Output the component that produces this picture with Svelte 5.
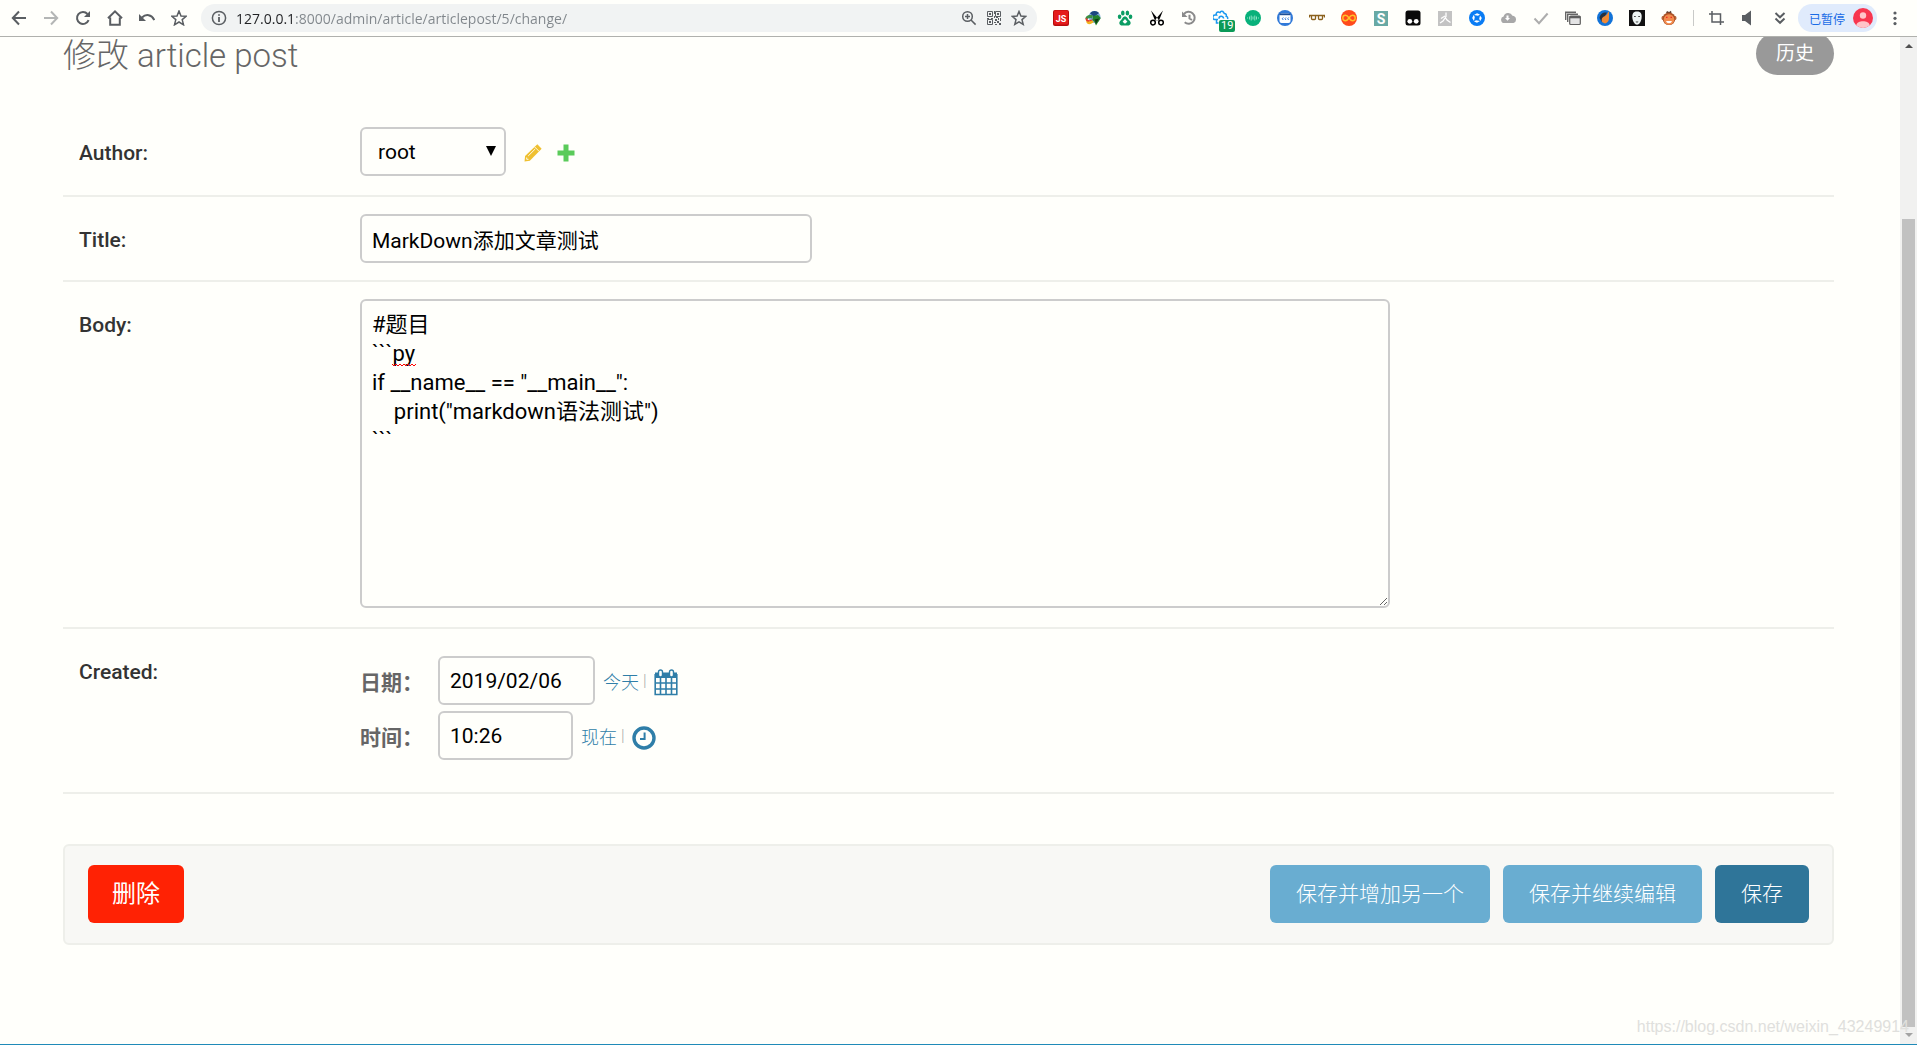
<script lang="ts">
	let url = $state('127.0.0.1:8000/admin/article/articlepost/5/change/');
	let author = $state('root');
	let title = $state('MarkDown添加文章测试');
	let body = $state(
		['#题目', '```py', 'if __name__ == "__main__":', '    print("markdown语法测试")', '```'].join('\n')
	);
	let createdDate = $state('2019/02/06');
	let createdTime = $state('10:26');

	const pad = (n: number) => String(n).padStart(2, '0');

	function setToday() {
		const d = new Date();
		createdDate = `${d.getFullYear()}/${pad(d.getMonth() + 1)}/${pad(d.getDate())}`;
	}

	function setNow() {
		const d = new Date();
		createdTime = `${pad(d.getHours())}:${pad(d.getMinutes())}`;
	}
</script>

<div class="browser">
	<header class="toolbar">
		<nav class="icons nav-icons">
			<button type="button" aria-label="Back">
				<svg viewBox="0 0 16 16"><path d="M15 8H2M8 1.5L1.8 8L8 14.5" class="line" /></svg>
			</button>
			<button type="button" aria-label="Forward" class="faded">
				<svg viewBox="0 0 16 16"><path d="M1 8H14M8 1.5L14.2 8L8 14.5" class="line" /></svg>
			</button>
			<button type="button" aria-label="Reload">
				<svg viewBox="0 0 16 16">
					<path d="M13.6 10.2A6 6 0 1 1 12.5 4" class="line" />
					<path d="M15 1V7H9z" />
				</svg>
			</button>
			<button type="button" aria-label="Home">
				<svg viewBox="0 0 16 16"><path d="M1 8.2L8 1.4L15 8.2M3.2 7.5V14.8H12.8V7.5" class="line" /></svg>
			</button>
			<button type="button" aria-label="Undo">
				<svg viewBox="0 0 16 16">
					<path d="M3 7.5C7 3.6 12.5 4.5 15.3 10" class="line" />
					<path d="M0 4V11H7z" />
				</svg>
			</button>
			<button type="button" aria-label="Favorites">
				<svg viewBox="0 0 16 16">
					<path d="M8 1L10 6L15.2 6.3L11.2 9.6L12.5 14.8L8 12L3.5 14.8L4.8 9.6L0.8 6.3L6 6z" class="line thin" />
				</svg>
			</button>
		</nav>

		<div class="omnibox">
			<svg viewBox="0 0 16 16" class="info">
				<circle cx="8" cy="8" r="6.6" class="line thin" />
				<path d="M7.1 7H8.9V12H7.1zM7.1 4.2H8.9V5.8H7.1z" />
			</svg>
			<input class="url" type="text" aria-label="Address" bind:value={url} />
			<div class="icons omnibox-icons">
				<button type="button" aria-label="Zoom">
					<svg viewBox="0 0 16 16">
						<circle cx="6.5" cy="6.5" r="4.8" class="line thin" />
						<path d="M10 10L14.6 14.6M4 6.5H9M6.5 4V9" class="line thin" />
					</svg>
				</button>
				<button type="button" aria-label="QR code">
					<svg viewBox="0 0 16 16">
						<path d="M1.5 1.5H6.5V6.5H1.5zM9.5 1.5H14.5V6.5H9.5zM1.5 9.5H6.5V14.5H1.5z" class="line hair" />
						<path d="M3 3H5V5H3zM11 3H13V5H11zM3 11H5V13H3zM8 1H9V4H8zM8 6H9V8H8zM1 8H3V9H1zM5 8H7V9H5zM9 9H11V11H9zM12 8H13V10H12zM14 8H15V11H14zM8 12H10V13H8zM11 11H13V13H11zM9 14H11V15H9zM13 13H15V15H13zM10 7H12V8H10z" />
					</svg>
				</button>
				<button type="button" aria-label="Bookmark">
					<svg viewBox="0 0 16 16">
						<path d="M8 1.5L9.9 6.1L14.8 6.4L11 9.6L12.2 14.4L8 11.8L3.8 14.4L5 9.6L1.2 6.4L6.1 6.1z" class="line thin" />
					</svg>
				</button>
			</div>
		</div>

		<div class="icons extensions">
			<button type="button" aria-label="JS">
				<svg viewBox="0 0 16 16">
					<rect width="16" height="16" rx="2" fill="#b80d0d" />
					<rect x="1" y="0.5" width="14" height="14" rx="1.5" fill="#e51c1c" />
					<text x="8" y="11.5" text-anchor="middle" font-size="9" font-weight="700" fill="#fff">JS</text>
				</svg>
			</button>
			<button type="button" aria-label="Download manager">
				<svg viewBox="0 0 16 16">
					<circle cx="9.5" cy="7" r="6" fill="#7fa9dc" />
					<path d="M5 3.2A6 6 0 0 1 14 3L9 7z" fill="#1c4780" />
					<path d="M0.5 9C0 6 4 4 8 5.5L7 8.5C4 7.5 3 8 2 10.5z" fill="#3d8f44" />
					<path d="M0.5 8.5C1 13 4 12.5 7 11L8 9C5 10.5 2.5 11 2 8z" fill="#e43b2c" />
					<path d="M1 11C2 15.5 6 14.5 9 12L7 10.5C4 12 3 12 1 11z" fill="#f2b51d" />
					<path d="M8 6L13 5L15.8 8L11 15.5L9.5 12L7.5 10z" fill="#23832b" />
					<path d="M9.5 9.5L14 8.5L11 14z" fill="#0c3b13" />
				</svg>
			</button>
			<button type="button" aria-label="Paw">
				<svg viewBox="0 0 16 16" class="green">
					<ellipse cx="2.6" cy="6.8" rx="1.8" ry="2.3" />
					<ellipse cx="5.8" cy="2.9" rx="1.8" ry="2.5" />
					<ellipse cx="10.4" cy="2.9" rx="1.8" ry="2.5" />
					<ellipse cx="13.5" cy="6.8" rx="1.8" ry="2.3" />
					<path d="M8 6.5C5.5 6.5 5.5 9 3.5 10.5C1 13 3 16 5.5 15.5H10.5C13 16 15 13 12.5 10.5C10.5 9 10.5 6.5 8 6.5z" />
					<path d="M8 9L10.4 11.7L8 13.8L5.6 11.7z" fill="#fff" />
				</svg>
			</button>
			<button type="button" aria-label="Scissors">
				<svg viewBox="0 0 16 16" class="black">
					<circle cx="4" cy="12.6" r="2.3" class="line thin" />
					<circle cx="12" cy="12.6" r="2.3" class="line thin" />
					<path d="M2 0.5L9.5 9.5L8 11L5.8 10zM14 0.5L6.5 9.5L8 11L10.2 10z" />
				</svg>
			</button>
			<button type="button" aria-label="History" class="gray">
				<svg viewBox="0 0 16 16">
					<path d="M3 4A6 6 0 1 1 3.7 12.3M8.5 4.8V8.5L11 10" class="line" />
					<path d="M1 1.5V7H6.5z" />
				</svg>
			</button>
			<button type="button" aria-label="Settings cloud" class="badged">
				<svg viewBox="0 0 16 16">
					<path d="M5 9.5H2A2.2 2.2 0 0 1 2 5L3.5 5A2 2 0 0 1 5.5 2L7 2.6A2 2 0 0 1 10.5 2.2L11.3 3.4A2 2 0 0 1 13.2 6.2A2 2 0 0 1 14.5 9M6 8.8A2.3 2.3 0 1 1 10.6 8.5M3.5 10V13H5.5" class="line thin sky" />
				</svg>
				<span class="badge">19</span>
			</button>
			<button type="button" aria-label="Audio">
				<svg viewBox="0 0 16 16">
					<circle cx="8" cy="8" r="8" fill="#08b17a" />
					<path d="M2 8H3M4.5 6.5V9.5M6.2 5.5V10.5M8 6.5V9.5M9.8 5.5V10.5M11.5 6.5V9.5M13 8H14" stroke="#8ce2c4" fill="none" />
				</svg>
			</button>
			<button type="button" aria-label="Chat">
				<svg viewBox="0 0 16 16">
					<circle cx="8" cy="8" r="8" fill="#3079d8" />
					<rect x="2.5" y="3.5" width="11" height="9.5" rx="2" fill="#fff" />
					<path d="M2.5 3.5H13.5V5.2H2.5z" fill="#1c4e96" />
					<path d="M6.3 7.5Q4.3 8.7 6.3 10M9 7.5Q7 8.7 9 10M11.7 7.5Q9.7 8.7 11.7 10" stroke="#3079d8" fill="none" />
				</svg>
			</button>
			<button type="button" aria-label="Glasses">
				<svg viewBox="0 0 16 16">
					<path d="M0.5 7.5V5.5H15.5V7.5M2.5 5.5V8.5Q2.5 9.5 3.5 9.5H5.5Q6.5 9.5 6.5 8.5V5.5M9.5 5.5V8.5Q9.5 9.5 10.5 9.5H12.5Q13.5 9.5 13.5 8.5V5.5" stroke="#8b611c" stroke-width="1.3" fill="none" />
				</svg>
			</button>
			<button type="button" aria-label="Infinity">
				<svg viewBox="0 0 16 16">
					<circle cx="8" cy="8" r="8" fill="#ff4a1c" />
					<path d="M8 8C6.5 5.8 5.5 5.3 4.5 5.3A2.7 2.7 0 0 0 4.5 10.7C5.5 10.7 6.5 10.2 8 8C9.5 5.8 10.5 5.3 11.5 5.3A2.7 2.7 0 0 1 11.5 10.7C10.5 10.7 9.5 10.2 8 8z" stroke="#ffc229" stroke-width="1.4" fill="none" />
				</svg>
			</button>
			<button type="button" aria-label="S">
				<svg viewBox="0 0 16 16">
					<rect x="1" y="1" width="14" height="15" fill="#68a9a4" />
					<text x="8" y="13.5" text-anchor="middle" font-size="14" font-weight="700" fill="#fff">S</text>
				</svg>
			</button>
			<button type="button" aria-label="Scripts">
				<svg viewBox="0 0 16 16">
					<rect x="0.5" y="0.5" width="15" height="15" rx="2.5" fill="#0a0a0a" />
					<circle cx="4.8" cy="11.3" r="2.4" fill="#fff" />
					<circle cx="11.2" cy="11.3" r="2.4" fill="#fff" />
				</svg>
			</button>
			<button type="button" aria-label="Runner">
				<svg viewBox="0 0 16 16">
					<rect x="1" y="1" width="14" height="15" fill="#c3c3c3" />
					<path d="M9 2.5V6.5L6 11L3 13M8 7L10 10L13.5 12.5M4 8.5L8 6" stroke="#fff" stroke-width="1.3" fill="none" />
				</svg>
			</button>
			<button type="button" aria-label="Compass">
				<svg viewBox="0 0 16 16">
					<circle cx="8" cy="8" r="8" fill="#0a7cf4" />
					<path d="M8 3.2L11 4.6L9 5.8L5 5zM12.8 8L11.4 11L10.2 9L11 5.5zM8 12.8L5 11.4L7 10.2L11 11zM3.2 8L4.6 5L5.8 7L5 11z" fill="#fff" />
				</svg>
			</button>
			<button type="button" aria-label="Cloud download">
				<svg viewBox="0 0 16 16">
					<path d="M3.5 13A3.3 3.3 0 0 1 2.6 6.5A4.8 4.8 0 0 1 11.5 5.8A3.7 3.7 0 0 1 12.5 13z" fill="#a8a8a8" />
					<path d="M5.5 5.5H7.5V8H9L6.5 10.8L4 8H5.5z" fill="#fff" />
				</svg>
			</button>
			<button type="button" aria-label="Check">
				<svg viewBox="0 0 16 16"><path d="M1.5 8.5L6 13.2L14.6 3.5" stroke="#adadad" stroke-width="2" fill="none" /></svg>
			</button>
			<button type="button" aria-label="Windows">
				<svg viewBox="0 0 16 16">
					<path d="M0.7 10V2.2H11M2.7 12V4.2H13" stroke="#666" stroke-width="1.4" fill="none" />
					<rect x="4.7" y="6" width="10.6" height="8.5" rx="1" fill="#e4e4e4" stroke="#5f5f5f" stroke-width="1.2" />
					<path d="M4.7 6H15.3V8.3H4.7z" fill="#5f5f5f" />
				</svg>
			</button>
			<button type="button" aria-label="Hand">
				<svg viewBox="0 0 16 16">
					<circle cx="8" cy="8" r="8" fill="#1273d8" />
					<path d="M2.5 8C3 4 6 2 10 2.5L8 6L5 12z" fill="#27313f" />
					<path d="M12 1.5C10 3 10.5 5 8 6C5 7 4 9 5 12L8 13.5C12 12.5 12 9 12 7z" fill="#f08a35" />
				</svg>
			</button>
			<button type="button" aria-label="Mask">
				<svg viewBox="0 0 16 16">
					<rect width="16" height="16" fill="#111" />
					<path d="M8 1.5C12 1.5 13 4 12.6 8C12 12 10 14.7 8 14.7C6 14.7 4 12 3.4 8C3 4 4 1.5 8 1.5z" fill="#eef4f3" />
					<path d="M5 6.5H6.8M9.2 6.5H11M6.8 11.8Q8 12.4 9.2 11.8" stroke="#222" stroke-width="0.8" fill="none" />
				</svg>
			</button>
			<button type="button" aria-label="Monkey">
				<svg viewBox="0 0 16 16">
					<circle cx="2.7" cy="8" r="2.3" fill="#b5673c" />
					<circle cx="13.3" cy="8" r="2.3" fill="#b5673c" />
					<path d="M6 1L8 2L10 0.8L10.5 3H5z" fill="#5b3f33" />
					<circle cx="8" cy="8.8" r="6.3" fill="#a95126" />
					<ellipse cx="8" cy="9.5" rx="5.3" ry="5.2" fill="#f28b4c" />
					<path d="M5 11H11Q10.5 13.3 8 13.3Q5.5 13.3 5 11z" fill="#fff" />
					<path d="M5 6.8H6.5V8H5zM9.5 6.8H11V8H9.5z" fill="#f22c22" />
				</svg>
			</button>
		</div>

		<span class="divider"></span>

		<div class="icons">
			<button type="button" aria-label="Crop">
				<svg viewBox="0 0 16 16"><path d="M4 1V12H16M1 4H12.5V15" class="line thin" /></svg>
			</button>
			<button type="button" aria-label="Sound">
				<svg viewBox="0 0 16 16"><path d="M2 5H5L11 0.5V15.5L5 11H2z" /></svg>
			</button>
			<button type="button" aria-label="More tools">
				<svg viewBox="0 0 16 16"><path d="M3.5 3L8 7.3L12.5 3M3.5 8.5L8 12.8L12.5 8.5" class="line" /></svg>
			</button>
		</div>

		<button type="button" class="profile">
			已暂停
			<svg viewBox="0 0 20 20" class="avatar">
				<circle cx="10" cy="10" r="10" fill="#f8364f" />
				<circle cx="10" cy="7.5" r="3.2" fill="#ffc4c9" />
				<path d="M3.2 17.3C4 11.8 16 11.8 16.8 17.3A10 10 0 0 1 3.2 17.3z" fill="#ffc4c9" />
			</svg>
		</button>

		<div class="icons">
			<button type="button" aria-label="Menu">
				<svg viewBox="0 0 16 16">
					<circle cx="8" cy="3" r="1.6" />
					<circle cx="8" cy="8.3" r="1.6" />
					<circle cx="8" cy="13.6" r="1.6" />
				</svg>
			</button>
		</div>
	</header>

	<div class="viewport">
		<main>
			<div class="page-head">
				<h1>修改 article post</h1>
				<a class="history" href="#history">历史</a>
			</div>

			<form onsubmit={(e) => e.preventDefault()}>
				<div class="form-row">
					<label class="name" for="id_author">Author:</label>
					<div class="field related">
						<span class="select-wrap">
							<select id="id_author" bind:value={author}>
								<option>root</option>
							</select>
							<svg viewBox="0 0 10 10" class="arrow"><path d="M0 0H10L5 10z" /></svg>
						</span>
						<a href="#change" aria-label="Change author" class="edit">
							<svg viewBox="0 0 20 20" fill="#efc030">
								<path d="M14.8 0.4L19.6 5.2L6.5 18.7L0.6 19.4L1.2 13.4z" />
								<path d="M12 3.4L16.8 8.2M4.6 13.4L12.4 5.6M3 15V17H5" stroke="#fffffb" fill="none" />
							</svg>
						</a>
						<a href="#add" aria-label="Add author">
							<svg viewBox="0 0 18 18" fill="#5acb5a"><path d="M6.5 0.5H11.5V6.5H17.5V11.5H11.5V17.5H6.5V11.5H0.5V6.5H6.5z" /></svg>
						</a>
					</div>
				</div>

				<div class="form-row">
					<label class="name" for="id_title">Title:</label>
					<div class="field">
						<input id="id_title" class="title-input" type="text" bind:value={title} />
					</div>
				</div>

				<div class="form-row">
					<label class="name" for="id_body">Body:</label>
					<div class="field body-field">
						<textarea id="id_body" spellcheck="false" bind:value={body}></textarea>
						<svg viewBox="0 0 24 4" class="squiggle">
							<path d="M0 1L2 3L4 1L6 3L8 1L10 3L12 1L14 3L16 1L18 3L20 1L22 3L24 1" />
						</svg>
					</div>
				</div>

				<div class="form-row">
					<span class="name">Created:</span>
					<div class="field datetime">
						<div class="line-row">
							<label for="id_created_0">日期：</label>
							<input id="id_created_0" class="date-input" type="text" bind:value={createdDate} />
							<span class="shortcuts">
								<a href="#today" onclick={setToday}>今天</a><i>|</i>
								<a href="#calendar" aria-label="Calendar" class="picker">
									<svg viewBox="0 0 24 27" class="calendar">
										<path d="M1 3.5H23V9H1z" />
										<path d="M1.2 5V25.5H22.8V5M1 14H23M1 20H23M6.5 9V26M12 9V26M17.5 9V26" stroke-width="1.6" class="cal-line" />
										<rect x="4.5" y="1" width="4" height="7" rx="2" class="ring" />
										<rect x="15.5" y="1" width="4" height="7" rx="2" class="ring" />
									</svg>
								</a>
							</span>
						</div>
						<div class="line-row">
							<label for="id_created_1">时间：</label>
							<input id="id_created_1" class="time-input" type="text" bind:value={createdTime} />
							<span class="shortcuts">
								<a href="#now" onclick={setNow}>现在</a><i>|</i>
								<a href="#clock" aria-label="Clock" class="picker">
									<svg viewBox="0 0 24 24" class="clock">
										<circle cx="12" cy="12" r="10" stroke-width="3.4" class="cal-line" />
										<path d="M12.6 6.5V13H8" stroke-width="2" class="cal-line" />
									</svg>
								</a>
							</span>
						</div>
					</div>
				</div>

				<div class="submit-row">
					<a href="#delete" class="btn delete">删除</a>
					<button type="submit" class="btn">保存并增加另一个</button>
					<button type="submit" class="btn">保存并继续编辑</button>
					<button type="submit" class="btn default">保存</button>
				</div>
			</form>
		</main>

		<div class="scrollbar">
			<svg viewBox="0 0 8 4"><path d="M0 4L4 0L8 4z" fill="#505050" /></svg>
			<div class="track"><div class="thumb"></div></div>
			<svg viewBox="0 0 8 4"><path d="M0 0L4 4L8 0z" fill="#a3a3a3" /></svg>
		</div>
		<span class="watermark">https://blog.csdn.net/weixin_43249914</span>
	</div>
</div>

<style>
	:global(body) {
		margin: 0;
		background: #fffffb;
		overflow: hidden;
	}

	.browser {
		box-sizing: border-box;
		height: 100vh;
		display: flex;
		flex-direction: column;
		border-bottom: 1px solid #1f8ab8;
		font-family: Roboto, 'Noto Sans CJK SC', sans-serif;
		font-size: 21px;
		color: #333;
	}

	button,
	input,
	select,
	textarea {
		box-sizing: border-box;
		margin: 0;
		font-family: inherit;
		font-size: inherit;
	}

	a {
		color: #2f7ea8;
		text-decoration: none;
	}

	svg {
		display: block;
	}

	/* toolbar */
	.toolbar {
		flex: none;
		display: flex;
		align-items: center;
		height: 36px;
		padding: 0 14px 0 11px;
		border-bottom: 1px solid #b0b1ad;
	}

	.icons {
		display: flex;
		gap: 16px;
	}

	.icons button {
		width: 16px;
		height: 16px;
		padding: 0;
		border: none;
		background: none;
		color: #5a5e62;
	}

	.icons svg,
	.info {
		width: 16px;
		height: 16px;
		fill: #5a5e62;
	}

	.icons .faded {
		opacity: 0.45;
	}

	.icons .gray svg {
		fill: #8a8a8a;
		color: #8a8a8a;
	}

	.icons svg.green {
		fill: #0b9d63;
	}

	.icons svg.black {
		fill: #000;
		color: #000;
	}

	.line {
		fill: none;
		stroke: currentColor;
		stroke-width: 2;
	}

	.thin {
		stroke-width: 1.5;
	}

	.hair {
		stroke-width: 1;
	}

	.sky {
		color: #1a98f0;
	}

	.omnibox {
		flex: 1;
		display: flex;
		align-items: center;
		height: 28px;
		margin: 0 16px 0 14px;
		padding: 0 10px;
		border-radius: 14px;
		background: #f1f3f3;
		color: #5a5e62;
	}

	.url {
		flex: 1;
		padding: 0 9px;
		border: none;
		outline: none;
		/* host is darker than the rest of the address */
		background: linear-gradient(90deg, #202124 68px, #80868b 68px);
		background-clip: text;
		color: transparent;
		font-family: 'Open Sans', sans-serif;
		font-size: 14px;
	}

	.omnibox-icons {
		gap: 9px;
	}

	.badged {
		position: relative;
	}

	.badge {
		position: absolute;
		left: 6px;
		top: 10px;
		padding: 0 2px;
		border-radius: 2px;
		background: #0b9a57;
		color: #fff;
		font-size: 11px;
		line-height: 12px;
	}

	.divider {
		width: 1px;
		height: 16px;
		margin: 0 14px 0 16px;
		background: #c9cac8;
	}

	.profile {
		display: flex;
		align-items: center;
		gap: 8px;
		height: 28px;
		margin: 0 10px;
		padding: 0 4px 0 11px;
		border: none;
		border-radius: 14px;
		background: #e0ebfc;
		color: #1a6be6;
		font-size: 12px;
	}

	.avatar {
		width: 20px;
		height: 20px;
	}

	/* page */
	.viewport {
		position: relative;
		flex: 1;
		min-height: 0;
		display: flex;
		overflow: hidden;
	}

	main {
		flex: 1;
		padding: 0 66px 0 63px;
	}

	.page-head {
		display: flex;
		justify-content: space-between;
		align-items: flex-end;
		height: 43px;
		margin: -5px 0 35px;
	}

	h1 {
		margin: 0;
		font-size: 33px;
		line-height: 38px;
		font-weight: 300;
		color: #666;
	}

	.history {
		padding: 0 20px;
		border-radius: 22px;
		background: #999;
		color: #fff;
		font-size: 19px;
		line-height: 43px;
	}

	.form-row {
		display: flex;
		align-items: flex-start;
		padding: 17px 16px;
		border-bottom: 2px solid #eeefea;
	}

	.name {
		flex: none;
		width: 281px;
		padding-top: 12px;
		line-height: 29px;
		font-weight: 500;
	}

	.field {
		flex: 1;
		display: flex;
	}

	.field input,
	select,
	textarea {
		height: 49px;
		padding: 0 10px;
		border: 2px solid #ccc;
		border-radius: 6px;
		background: #fffffb;
		color: #000;
	}

	.related {
		align-items: center;
		gap: 15px;
		padding-bottom: 2px;
	}

	.related a svg {
		width: 18px;
		height: 18px;
	}

	.related a {
		padding-top: 2px;
	}

	.related .edit {
		margin-left: 3px;
	}

	.select-wrap {
		position: relative;
	}

	select {
		display: block;
		width: 146px;
		padding: 0 16px;
		appearance: none;
	}

	.arrow {
		position: absolute;
		right: 10px;
		top: 19px;
		width: 10px;
		height: 10px;
		pointer-events: none;
	}

	.title-input {
		width: 452px;
	}

	.body-field {
		position: relative;
		padding-bottom: 2px;
	}

	textarea {
		width: 1030px;
		height: 309px;
		padding: 9px 10px;
		font-size: 22px;
		line-height: 29px;
		resize: both;
	}

	.squiggle {
		position: absolute;
		left: 32px;
		top: 64px;
		width: 24px;
		height: 4px;
		fill: none;
		stroke: #f00;
		pointer-events: none;
	}

	.datetime {
		flex-direction: column;
		gap: 6px;
		padding: 10px 0 15px;
	}

	.line-row {
		display: flex;
		align-items: center;
	}

	.line-row label {
		width: 78px;
		font-weight: 700;
		color: #666;
	}

	.date-input {
		width: 157px;
	}

	.time-input {
		width: 135px;
	}

	.shortcuts {
		display: flex;
		align-items: center;
		margin-left: 8px;
		font-size: 18px;
		font-weight: 300;
	}

	.shortcuts i {
		margin: 0 7px 0 4px;
		font-style: normal;
		font-size: 16px;
		color: #aaa;
	}

	.picker {
		padding-top: 4px;
	}

	.calendar {
		width: 24px;
		height: 27px;
		fill: #2f7ea8;
	}

	.clock {
		width: 24px;
		height: 24px;
	}

	.cal-line {
		fill: none;
		stroke: #2f7ea8;
	}

	.ring {
		fill: #fffffb;
		stroke: #2f7ea8;
		stroke-width: 1.4;
	}

	.submit-row {
		display: flex;
		align-items: center;
		gap: 13px;
		margin-top: 50px;
		padding: 19px 23px 20px;
		border: 2px solid #eeefea;
		border-radius: 6px;
		background: #f8f8f5;
	}

	.btn {
		height: 58px;
		padding: 0 26px;
		border: none;
		border-radius: 6px;
		background: #69add1;
		color: #fff;
		font-weight: 300;
		line-height: 58px;
	}

	.default {
		background: #2f7599;
	}

	.delete {
		margin-right: auto;
		padding: 0 24px;
		background: #ff2204;
		font-size: 24px;
		font-weight: 400;
	}

	/* scrollbar */
	.scrollbar {
		display: flex;
		flex-direction: column;
		align-items: center;
		box-sizing: border-box;
		width: 17px;
		padding: 7px 0;
		background: #f1f1f0;
	}

	.scrollbar svg {
		width: 8px;
		height: 4px;
	}

	.track {
		flex: 1;
		display: flex;
		flex-direction: column;
		justify-content: flex-end;
		width: 13px;
		padding: 6px 0;
	}

	.thumb {
		height: 83%;
		background: #c1c1c1;
	}

	.watermark {
		position: absolute;
		right: 8px;
		bottom: 7px;
		font-family: 'Liberation Sans', sans-serif;
		font-size: 16px;
		line-height: 20px;
		color: #e0e0dd;
		pointer-events: none;
	}
</style>
